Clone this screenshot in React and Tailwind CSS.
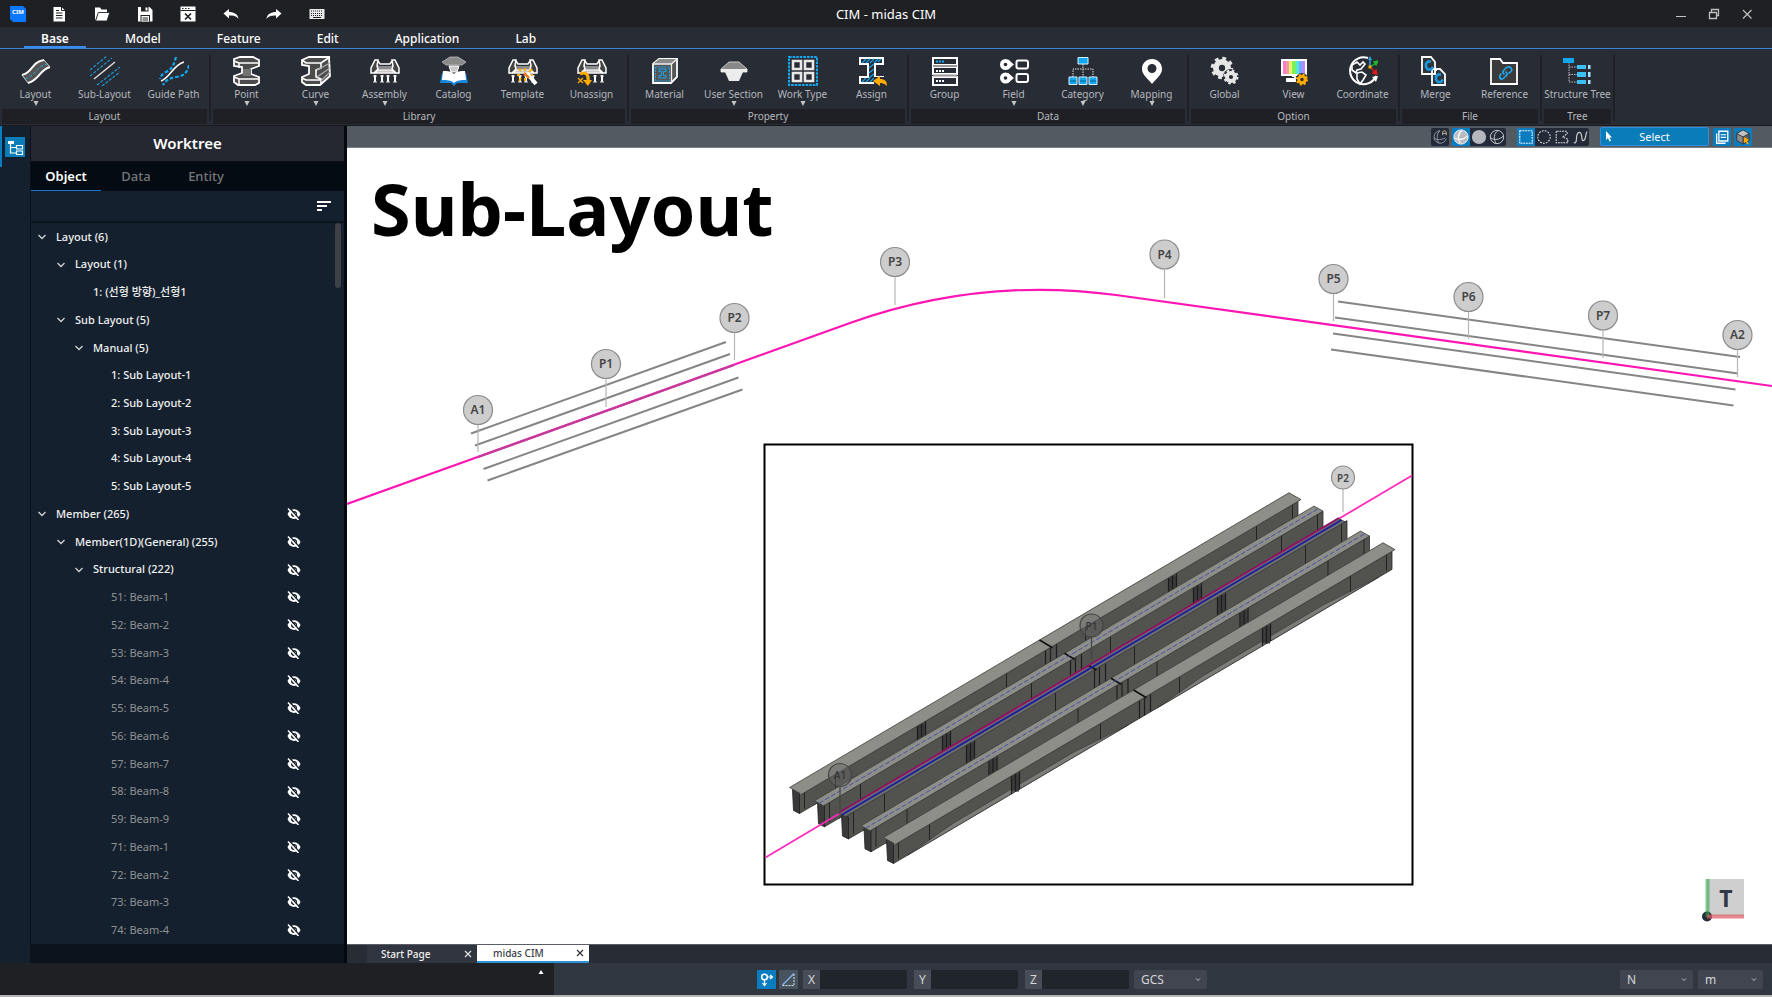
import { useState } from "react";

/* ---------- quick access icons (16 x 16) ---------- */

const quickIcons = [
  {
    name: "New",
    art: (
      <>
        <path d="M2.5 1h8l3.500 3.500V15.500H2.500z" fill="#fff" />
        <path d="M10.500 1v3.500H14" fill="none" stroke="#1f2024" />
        <path d="M5 4.500h3M5 7h6.500M5 9.500h6.500M5 12h6.500" stroke="#1f2024" />
      </>
    ),
  },
  {
    name: "Open",
    art: (
      <>
        <path d="M1 15V1.500h5l1.500 2H13V7H4.500z" fill="#fff" />
        <path d="M4.300 6.500H15.800L13 15H1.500z" fill="#fff" stroke="#1f2024" strokeWidth="0.900" />
      </>
    ),
  },
  {
    name: "Save",
    art: (
      <>
        <path d="M1 1h11.500L15.500 4v11.500H1z" fill="#fff" />
        <path d="M4 1h7.500v4.500H4zM3.500 9h9.500v6.500H3.500z" fill="#1f2024" />
        <path d="M8.500 1.500h2v3h-2zM4.500 10h7.500v5.500H4.500z" fill="#fff" />
        <path d="M5.500 12h5.500M5.500 14h5.500" stroke="#1f2024" />
      </>
    ),
  },
  {
    name: "Close file",
    art: (
      <>
        <path d="M.5.500h15v15H.500z" fill="#fff" />
        <path d="M.5 4.500h15" stroke="#1f2024" />
        <path d="M2 2.500h1.500M5 2.500h1.500M8 2.500h1.500" stroke="#1f2024" />
        <path d="M5 7.500l6 6M11 7.500l-6 6" stroke="#1f2024" strokeWidth="1.700" />
      </>
    ),
  },
  {
    name: "Undo",
    art: <path d="M6 3v3c5 0 9 2 9.500 7-2-3-5-3.500-9.500-3.500v3L.5 7.500z" fill="#fff" />,
  },
  {
    name: "Redo",
    art: <path d="M10 3v3C5 6 1 8 .5 13c2-3 5-3.500 9.500-3.500v3l5.500-5z" fill="#fff" />,
  },
  {
    name: "Keyboard",
    art: (
      <>
        <path d="M.5 3h15v10H.500z" fill="#e8e8e8" />
        <path
          d="M2 5h12M2 7.500h12M2 9.500h12"
          stroke="#1f2024"
          strokeDasharray="1 1"
        />
        <path d="M4 11.500h8" stroke="#1f2024" />
      </>
    ),
  },
];

/* ---------- ribbon icons (30 x 30) ---------- */

function Girders() {
  return (
    <>
      <path d="M5 5l4 5h12l4-5 4 9-3 4H4l-3-4z" fill="#8b8b8b" />
      <path d="M8 4H5L1 12v5h3l4-4-1-3z" fill="#444" stroke="#fff" strokeWidth="1.500" />
      <path d="M22 4h3l4 8v5h-3l-4-4 1-3z" fill="#444" stroke="#fff" strokeWidth="1.500" />
      <path d="M8 5l2 3h10l2-3" fill="none" stroke="#fff" strokeWidth="1.500" />
      <path d="M8 14l-3 3h20l-3-3z" fill="#c8c8c8" stroke="#fff" strokeWidth="1.200" />
      <path d="M5 19v7M12 19v7M18 19v7M25 19v7" stroke="#fff" strokeWidth="2" />
      <path d="M3 26h4M10 26h4M16 26h4M23 26h4M3 20h4M10 20h4M16 20h4M23 20h4" stroke="#ddd" strokeWidth="1" />
    </>
  );
}

function Gear({ cx, cy, r, fill, hole }) {
  return (
    <g>
      <circle cx={cx} cy={cy} r={r} fill={fill} />
      <circle
        cx={cx}
        cy={cy}
        r={r}
        fill="none"
        stroke={fill}
        strokeWidth={r * 0.5}
        strokeDasharray={`${(r * Math.PI) / 8} ${(r * Math.PI) / 8}`}
      />
      <circle cx={cx} cy={cy} r={r * 0.35} fill={hole} />
    </g>
  );
}

const icons = {
  layout: (
    <>
      <path d="M1 20C12 18 10 8 23 4l6 6C18 13 19 23 7 27z" fill="#555" />
      <path d="M1 19C12 17 10 6 23 4M7 27C19 24 18 14 29 11" fill="none" stroke="#fff" strokeWidth="2" />
      <path d="M1 19l6 8M23 4l6 7" stroke="#ccc" strokeWidth="1" />
      <path d="M4 23C15 20 14 11 26 8" fill="none" stroke="#29a9e0" strokeWidth="1" strokeDasharray="3 2" />
    </>
  ),
  subLayout: (
    <>
      <g stroke="#1f9bd7" strokeWidth="1.200" strokeDasharray="3 1.500">
        <path d="M0 14L17 0M0 20L22 2M7 29L30 11M12 30L30 16" />
      </g>
      <path d="M4 23L25 6" stroke="#ddd" strokeWidth="1.500" />
    </>
  ),
  guide: (
    <>
      <path d="M2 25C11 22 14 9 25 6" fill="none" stroke="#fff" strokeWidth="1.500" />
      <path
        d="M17 1C15 7 15 12 7 16C4 18 2 19 1 23M30 9C28 17 25 20 17 21C11 22 7 24 4 29"
        fill="none"
        stroke="#12a8f0"
        strokeWidth="2.200"
        strokeDasharray="3.500 2"
      />
    </>
  ),
  point: (
    <>
      <path d="M2 3L8 1h13l6 3v6l-8 3v5l8 3v6l-4 2H6l-4-3v-6l8-3v-6L2 10z" fill="#4b4b4b" stroke="#fff" strokeWidth="1.800" />
      <path d="M2 5l5 2h19M2 21l5 2h19M7 7v5M7 23v5" fill="none" stroke="#fff" strokeWidth="1.500" />
      <path d="M11 13h8v7h-8z" fill="#737373" />
    </>
  ),
  curve: (
    <>
      <path d="M1 4L8 1h20l1 19-10 9H5l-4-3v-5l7-3v-8L1 9z" fill="#4b4b4b" stroke="#fff" strokeWidth="1.800" />
      <path d="M1 4l4 3h15L29 1M20 7v5l-5 2v7l5 2v6M1 22l4 2h15" fill="none" stroke="#fff" strokeWidth="1.600" />
      <path d="M16 14L29 7M16 21L29 12M20 25l9-9" stroke="#aaa" strokeWidth="1.400" />
    </>
  ),
  assembly: <Girders />,
  catalog: (
    <>
      <path d="M3 17l12 2 12-2 2 10H18l-3 3-3-3H1z" fill="#1687dc" />
      <path d="M4 15c5 0 8 0 11 3 3-3 6-3 11-3l1 9c-5 0-9 0-12 3-3-3-7-3-12-3z" fill="#fff" />
      <path d="M3 6L11 1h8l8 5-4 3H7z" fill="#8a8a8a" stroke="#bbb" strokeWidth="0.800" />
      <path d="M10 10h10l-2 6h-6z" fill="#c9c9c9" stroke="#fff" />
    </>
  ),
  template: (
    <>
      <Girders />
      <path d="M19 17l9 11" stroke="#fff" strokeWidth="4" />
      <path d="M16 17l5 5" stroke="#f47a1f" strokeWidth="2.500" />
      <path
        d="M17 15v-3M21 16l3-3M13 15l-2-2M12 19H9M13 22l-2 3M17 22v3M23 19h2"
        stroke="#ffab00"
        strokeWidth="2"
      />
    </>
  ),
  unassign: (
    <>
      <Girders />
      <path d="M0 18h15v12H0z" fill="#282c35" />
      <path d="M1 22l5 5M6 22l-5 5" stroke="#ffab00" strokeWidth="1.300" />
      <path d="M3 18c6-3 9 1 8 7" fill="none" stroke="#ffab00" strokeWidth="3" />
      <path d="M6 24h9l-4 6z" fill="#ffab00" />
    </>
  ),
  material: (
    <>
      <path d="M3 8l6-5h18v18l-6 6H3z" fill="#555" stroke="#fff" strokeWidth="1.800" />
      <path d="M3 8l6-5h18l-5 5z" fill="#8b8b8b" />
      <path d="M3 8h18.500v19M21.500 8L27 3" fill="none" stroke="#eee" strokeWidth="1.300" />
      <path d="M5.500 11h14v14h-14z" fill="none" stroke="#12a8f0" strokeDasharray="2 1" />
      <path d="M9 13h7v2.500h-2.500v4H16V22H9v-2.500h2.500v-4H9z" fill="none" stroke="#12a8f0" />
    </>
  ),
  userSection: (
    <>
      <path d="M2 13L10 6h10l8 7v3H2z" fill="#888" stroke="#ccc" />
      <path d="M2 13h26v3H2z" fill="#eee" />
      <path d="M6 16h18l-4 9H10z" fill="#ececec" />
    </>
  ),
  workType: (
    <>
      <path d="M1 1h28v28H1z" fill="none" stroke="#12a8f0" strokeWidth="2" strokeDasharray="2.600 1" />
      <path d="M5 5h8v8H5zM17 5h8v8h-8zM5 17h8v8H5zM17 17h8v8h-8z" fill="#282c35" stroke="#e8e8e8" strokeWidth="2.600" />
    </>
  ),
  assign: (
    <>
      <path d="M3 2h23v6h-8v13h8v6H3v-6h8V8H3z" fill="#282c35" stroke="#fff" strokeWidth="2" />
      <path
        d="M5 7l4-4M9 7l4-4M13 7l4-4M17 7l4-4M21 6l3-3M12 12l5-4M12 17l5-4M12 22l5-4M5 26l4-4M9 26l4-4M13 26l4-4M17 26l4-4"
        stroke="#12a8f0"
        strokeWidth="1.200"
      />
      <path d="M17 21h13v9H17z" fill="#282c35" />
      <path d="M23 20v3c5 0 7 2 7 7-2-2-4-3-7-3v3l-7-5z" fill="#ffab00" />
    </>
  ),
  group: (
    <>
      <path d="M3 2h24v7H3zM3 11h24v7H3zM3 21h24v8H3z" fill="none" stroke="#fff" strokeWidth="2" />
      <path d="M3 10h24M3 19.500h24" stroke="#999" strokeWidth="2" />
      <path d="M6 5.500h8" stroke="#12a8f0" strokeWidth="2" strokeDasharray="2 1" />
      <path d="M6 15h8M6 25h8" stroke="#fff" strokeWidth="2" strokeDasharray="2 1" />
    </>
  ),
  field: (
    <>
      <g fill="#fff">
        <circle cx="6.500" cy="8.500" r="5.500" />
        <path d="M9 3.500l6 5-6 5z" />
        <circle cx="6.500" cy="22" r="5.500" />
        <path d="M9 17l6 5-6 5z" />
      </g>
      <circle cx="6.500" cy="8.500" r="1.800" fill="#282c35" />
      <circle cx="6.500" cy="22" r="1.800" fill="#282c35" />
      <rect x="17.500" y="4.500" width="11.500" height="8" rx="2" fill="none" stroke="#fff" strokeWidth="2" />
      <rect x="17.500" y="18" width="11.500" height="8" rx="2" fill="none" stroke="#fff" strokeWidth="2" />
    </>
  ),
  category: (
    <>
      <path d="M15 8v13M5 21v-8h20v8" fill="none" stroke="#ddd" strokeDasharray="1.500 1" />
      <path d="M10 1.500h10V8H10zM1 21h8v7.500H1zM11 21h8v7.500h-8zM21 21h8v7.500h-8z" fill="#12a8f0" stroke="#d6efff" />
      <path d="M2 25h6M12 25h6M22 25h6" stroke="#0a5f92" />
    </>
  ),
  mapping: (
    <path
      fillRule="evenodd"
      d="M15 3C9 3 5 7.500 5 13c0 6 6 9.500 10 15 4-5.500 10-9 10-15 0-5.500-4-10-10-10zm0 5a4.500 4.500 0 110 9 4.500 4.500 0 010-9z"
      fill="#fff"
    />
  ),
  global: (
    <>
      <Gear cx={12} cy={12} r={9} fill="#e6e6e6" hole="#282c35" />
      <circle cx="21" cy="21" r="8" fill="#282c35" />
      <Gear cx={21} cy={21} r={6} fill="#e6e6e6" hole="#282c35" />
    </>
  ),
  view: (
    <>
      <path d="M2 3h26v17H2z" fill="#fff" />
      <path d="M4 5h3v13H4z" fill="#ff7bd0" />
      <path d="M7 5h3v13H7z" fill="#e8a0a0" />
      <path d="M10 5h3v13h-3z" fill="#f4f06a" />
      <path d="M13 5h4v13h-4z" fill="#7dee5c" />
      <path d="M17 5h3v13h-3z" fill="#55e6d8" />
      <path d="M20 5h3v13h-3z" fill="#7aa8ff" />
      <path d="M23 5h3v13h-3z" fill="#b38bff" />
      <path d="M13 20h3v3H8v2h9" fill="none" stroke="#fff" strokeWidth="1.800" />
      <circle cx="23" cy="23" r="6" fill="#282c35" />
      <Gear cx={23} cy={23.5} r={4.8} fill="#ffab00" hole="#282c35" />
    </>
  ),
  coordinate: (
    <>
      <path d="M20 2A13.500 13.500 0 1028 20" fill="none" stroke="#fff" strokeWidth="2" />
      <path d="M24 21l6-1-2 6z" fill="#fff" />
      <path d="M4 9l5-3 3 3 3-3 2 2-4 5-4 1-1 3-4-3z" fill="#282c35" stroke="#fff" strokeWidth="1.600" />
      <path d="M9 17l5-1 4 3-3 5-3 4-3-5z" fill="#282c35" stroke="#fff" strokeWidth="1.600" />
      <path d="M22 11V3" stroke="#29a9e0" strokeWidth="1.500" />
      <path d="M20 4l2-4 2 4z" fill="#29a9e0" />
      <path d="M22 11l6-4M26 6l4-1-2 4z" stroke="#1fb52a" strokeWidth="1.300" fill="#1fb52a" />
      <path d="M22 11l5 5M25 17l4 1-1-4z" stroke="#e01a1a" strokeWidth="1.300" fill="#e01a1a" />
      <path d="M20.500 9.500h3v3h-3z" fill="#ffab00" />
    </>
  ),
  merge: (
    <>
      <path d="M1 1h9l4 5v12H1zM11 13h8l5 5v11H11z" fill="#30343c" stroke="#fff" strokeWidth="1.800" />
      <path d="M10 5.500H7L5 8v3l2 2.500h3L12 11M20 18.500h-3l-2 2v3l2 2.500h3l2-2.500" fill="none" stroke="#1a9be0" strokeWidth="2.600" />
      <path d="M12 18l5-5" stroke="#fff" />
    </>
  ),
  reference: (
    <>
      <path d="M1 3h9l3 4h14v21H1z" fill="#3b3b3b" stroke="#fff" strokeWidth="1.800" />
      <g fill="none" stroke="#1fa8ee" strokeWidth="1.700" strokeLinecap="round">
        <path d="M14 18c-2-2-1-3 1-5s4-3 6-1 0 4-2 5" />
        <path d="M16 16c2 2 1 3-1 5s-4 3-5 1 0-3 1-4" />
      </g>
    </>
  ),
  structureTree: (
    <>
      <path d="M6 6v20h9M6 11h9M6 18.500h9" fill="none" stroke="#bbb" strokeDasharray="1.500 1" />
      <path d="M0 2h11v5H0z" fill="#12a8f0" />
      <path d="M14 9h9v4h-9zM14 16h9v5h-9zM14 24h9v4h-9z" fill="#3cc0f8" />
      <path d="M25 9h2.500v4H25zM25 16h2.500v5H25zM25 24h2.500v4H25z" fill="#a8e4ff" />
    </>
  ),
};

const ribbon = [
  {
    title: "Layout",
    tools: [
      { label: "Layout", icon: "layout", menu: true },
      { label: "Sub-Layout", icon: "subLayout" },
      { label: "Guide Path", icon: "guide" },
    ],
  },
  {
    title: "Library",
    tools: [
      { label: "Point", icon: "point", menu: true },
      { label: "Curve", icon: "curve", menu: true },
      { label: "Assembly", icon: "assembly", menu: true },
      { label: "Catalog", icon: "catalog" },
      { label: "Template", icon: "template" },
      { label: "Unassign", icon: "unassign" },
    ],
  },
  {
    title: "Property",
    tools: [
      { label: "Material", icon: "material" },
      { label: "User Section", icon: "userSection", menu: true },
      { label: "Work Type", icon: "workType", menu: true },
      { label: "Assign", icon: "assign" },
    ],
  },
  {
    title: "Data",
    tools: [
      { label: "Group", icon: "group" },
      { label: "Field", icon: "field", menu: true },
      { label: "Category", icon: "category", menu: true },
      { label: "Mapping", icon: "mapping", menu: true },
    ],
  },
  {
    title: "Option",
    tools: [
      { label: "Global", icon: "global" },
      { label: "View", icon: "view" },
      { label: "Coordinate", icon: "coordinate" },
    ],
  },
  {
    title: "File",
    tools: [
      { label: "Merge", icon: "merge" },
      { label: "Reference", icon: "reference" },
    ],
  },
  {
    title: "Tree",
    tools: [{ label: "Structure Tree", icon: "structureTree" }],
  },
];

const menuTabs = ["Base", "Model", "Feature", "Edit", "Application", "Lab"];

const tree = [
  { text: "Layout (6)", level: 0, open: true },
  { text: "Layout (1)", level: 1, open: true },
  { text: "1: (선형 방향)_선형1", level: 2 },
  { text: "Sub Layout (5)", level: 1, open: true },
  { text: "Manual (5)", level: 2, open: true },
  { text: "1: Sub Layout-1", level: 3 },
  { text: "2: Sub Layout-2", level: 3 },
  { text: "3: Sub Layout-3", level: 3 },
  { text: "4: Sub Layout-4", level: 3 },
  { text: "5: Sub Layout-5", level: 3 },
  { text: "Member (265)", level: 0, open: true, eye: true },
  { text: "Member(1D)(General) (255)", level: 1, open: true, eye: true },
  { text: "Structural (222)", level: 2, open: true, eye: true },
  { text: "51: Beam-1", level: 3, eye: true, dim: true },
  { text: "52: Beam-2", level: 3, eye: true, dim: true },
  { text: "53: Beam-3", level: 3, eye: true, dim: true },
  { text: "54: Beam-4", level: 3, eye: true, dim: true },
  { text: "55: Beam-5", level: 3, eye: true, dim: true },
  { text: "56: Beam-6", level: 3, eye: true, dim: true },
  { text: "57: Beam-7", level: 3, eye: true, dim: true },
  { text: "58: Beam-8", level: 3, eye: true, dim: true },
  { text: "59: Beam-9", level: 3, eye: true, dim: true },
  { text: "71: Beam-1", level: 3, eye: true, dim: true },
  { text: "72: Beam-2", level: 3, eye: true, dim: true },
  { text: "73: Beam-3", level: 3, eye: true, dim: true },
  { text: "74: Beam-4", level: 3, eye: true, dim: true },
];

const indent = ["pl-[5px]", "pl-[24px]", "pl-[42px]", "pl-[60px]"];

function TitleBar() {
  return (
    <div className="grid h-[27px] shrink-0 grid-cols-[1fr_auto_1fr] items-center bg-[#1f2024]">
      <div className="flex items-center gap-[27px] pl-[10px]">
        <svg viewBox="0 0 16 16" className="-mr-[2px] size-4" aria-label="CIM">
          <path d="M1 0h12l3 3v13H3l-3-3V0z" fill="#0a78ff" />
          <text x="8" y="7.500" textAnchor="middle" fontSize="6" fontWeight="700" fill="#fff">
            CIM
          </text>
        </svg>
        {quickIcons.map((q) => (
          <button key={q.name} aria-label={q.name}>
            <svg viewBox="0 0 16 16" className="block size-4">
              {q.art}
            </svg>
          </button>
        ))}
      </div>
      <h1 className="pt-[2px] text-[13px] text-white">CIM - midas CIM</h1>
      <div className="flex justify-end gap-[17px] pr-[17px]">
        <button aria-label="Minimize">
          <svg viewBox="0 0 16 16" className="block size-4">
            <path d="M3 10.500h10" stroke="#c0c0c0" />
          </svg>
        </button>
        <button aria-label="Restore">
          <svg viewBox="0 0 16 16" className="block size-4">
            <path d="M3.500 6.500h7v6h-7zM5.500 6V3.500h7v6H11" fill="none" stroke="#c0c0c0" strokeWidth="1.300" />
          </svg>
        </button>
        <button aria-label="Close">
          <svg viewBox="0 0 16 16" className="block size-4">
            <path d="M4 4l8.500 8.500M12.500 4L4 12.500" stroke="#c0c0c0" strokeWidth="1.200" />
          </svg>
        </button>
      </div>
    </div>
  );
}

function Ribbon() {
  const [tab, setTab] = useState("Base");

  return (
    <div className="shrink-0 bg-[#282c35]">
      <div className="flex h-[22px] gap-[22px] border-b border-[#3b82dc] pl-6">
        {menuTabs.map((name) => (
          <button
            key={name}
            onClick={() => setTab(name)}
            className={`h-[21px] border-b-2 px-[17px] pt-[2px] text-[12px] leading-[20px] text-white ${
              tab === name ? "border-[#3b8cf0] font-semibold" : "border-transparent font-medium"
            }`}
          >
            {name}
          </button>
        ))}
      </div>
      <div className="flex h-[77px] border-b border-[#191b20]">
        {ribbon.map((group) => (
          <div key={group.title} className="flex pl-px">
            <div>
              <div className="flex">
                {group.tools.map((tool) => (
                  <button key={tool.label} className="flex h-[60px] w-[69px] flex-col items-center pt-[7px]">
                    <svg viewBox="0 0 30 30" className="size-[30px] shrink-0">
                      {icons[tool.icon]}
                    </svg>
                    <span className="pt-px text-[10px] leading-[15px] whitespace-nowrap text-[#b4b8be]">
                      {tool.label}
                    </span>
                    {tool.menu && (
                      <svg viewBox="0 0 6 5" className="-mt-px h-[5px] w-[6px]">
                        <path d="M.5 0h5L3 5z" fill="#c8c8c8" />
                      </svg>
                    )}
                  </button>
                ))}
              </div>
              <div className="mx-px h-[15px] bg-[#1f2025] text-center text-[10px] leading-[15px] text-[#b4b8be]">
                {group.title}
              </div>
            </div>
            <div className="mt-[6px] mb-[4px] ml-px w-[2px] bg-[#1d2027]"></div>
          </div>
        ))}
      </div>
    </div>
  );
}

function Worktree() {
  const [tab, setTab] = useState("Object");

  return (
    <aside className="flex w-[317px] shrink-0 flex-col border-r-3 border-l border-r-[#04080f] border-l-[#0b121b] bg-[#14202d]">
      <h2 className="h-[35px] shrink-0 bg-[#252831] text-center text-[15px] leading-[34px] font-semibold text-white">
        Worktree
      </h2>
      <div className="flex h-[30px] shrink-0 border-t border-[#0b0f15] bg-[#040b12]">
        {["Object", "Data", "Entity"].map((name) => (
          <button
            key={name}
            onClick={() => setTab(name)}
            className={`w-[70px] border-b text-[13px] leading-[26px] ${
              tab === name
                ? "border-[#1a78c8] font-semibold text-white"
                : "border-transparent font-medium text-[#75777b]"
            }`}
          >
            {name}
          </button>
        ))}
      </div>
      <div className="flex h-[32px] shrink-0 items-center justify-end border-b-2 border-[#0c141e] pr-[13px]">
        <button aria-label="Sort">
          <svg viewBox="0 0 14 10" className="block h-[10px] w-[14px]">
            <path d="M0 1h14M0 5h10M0 9h5" stroke="#fff" strokeWidth="2" />
          </svg>
        </button>
      </div>
      <div className="relative flex min-h-0 flex-1 flex-col overflow-hidden">
        {tree.map((row) => (
          <div key={row.text} className={`flex min-h-5 flex-1 items-center pr-[43px] ${indent[row.level]}`}>
            <span className="w-[20px]">
              {row.open && (
                <svg viewBox="0 0 10 6" className="ml-px h-[6px] w-[10px]">
                  <path d="M1.500 1L5 4.500 8.500 1" fill="none" stroke="#d0d3d6" strokeWidth="1.300" />
                </svg>
              )}
            </span>
            <span className={`flex-1 text-[11px] ${row.dim ? "text-[#8f9294]" : "font-medium text-[#f0f1f2]"}`}>
              {row.text}
            </span>
            {row.eye && (
              <button aria-label={`Show ${row.text}`}>
                <svg viewBox="0 0 14 12" className="block h-[12px] w-[14px]">
                  <path d="M.5 6C3-.5 11-.5 13.500 6 11 12.500 3 12.500.5 6z" fill="#fff" />
                  <circle cx="7" cy="6" r="3" fill="#14202d" />
                  <circle cx="7.500" cy="6" r="1.600" fill="#fff" />
                  <path d="M2.500 0l10 11" stroke="#14202d" strokeWidth="1.500" />
                  <path d="M1 .5L11.500 12" stroke="#fff" strokeWidth="1.500" />
                </svg>
              </button>
            )}
          </div>
        ))}
        <div className="absolute top-0 right-[3px] h-[65px] w-[6px] rounded-full bg-[#3d4047]"></div>
      </div>
      <div className="h-[19px] shrink-0 bg-[#0c131d]"></div>
    </aside>
  );
}

function ToolIcon({ label, active, children }) {
  return (
    <button aria-label={label} className={`p-px ${active ? "bg-[#0a7cc0]" : ""}`}>
      <svg viewBox="0 0 18 18" className="block size-4">
        {children}
      </svg>
    </button>
  );
}

function ViewBar() {
  return (
    <div className="flex h-[22px] shrink-0 items-center justify-end border-b border-[#7b8087] bg-[#545a62] pr-5">
      <div className="flex rounded-xs bg-[#242b38]">
        <ToolIcon label="Auto shading">
          <path d="M9 2a7 7 0 107 9M2 10c4 3 9 2 13 0M9 2c-4 3-4 10-1 14" fill="none" stroke="#9a9ea5" />
          <path d="M12 7V3l2-1 2 1v4M12 5h4" fill="none" stroke="#c8b8a0" />
        </ToolIcon>
      </div>
      <div className="ml-[3px] flex rounded-xs bg-[#242b38]">
        <ToolIcon label="Shaded with edges" active>
          <circle cx="9" cy="9" r="8" fill="#b8bbc0" />
          <path d="M2 10c4 3 10 2 14-2M10 2c-5 3-5 10-2 14" fill="none" stroke="#fff" strokeWidth="1.300" />
          <circle cx="9" cy="9" r="8" fill="none" stroke="#fff" />
        </ToolIcon>
        <ToolIcon label="Shaded">
          <circle cx="9" cy="9" r="8" fill="#b4b7bd" />
        </ToolIcon>
        <ToolIcon label="Wireframe">
          <circle cx="9" cy="9" r="7.500" fill="none" stroke="#d5d8dc" />
          <path d="M2 10c4 3 10 2 14-2M10 2c-5 3-5 10-2 14" fill="none" stroke="#d5d8dc" />
        </ToolIcon>
      </div>
      <div className="ml-[11px] flex rounded-xs bg-[#242b38]">
        <ToolIcon label="Box select" active>
          <path d="M2 2h14v14H2z" fill="none" stroke="#fff" strokeWidth="1.200" strokeDasharray="2 1" />
        </ToolIcon>
        <ToolIcon label="Circle select">
          <circle cx="9" cy="9" r="7" fill="none" stroke="#e0e0e0" strokeWidth="1.200" strokeDasharray="2 1.300" />
        </ToolIcon>
        <ToolIcon label="Polygon select">
          <path d="M2.500 2.500v13h13v-4L10 9l5-4-1-2.500z" fill="none" stroke="#e0e0e0" strokeWidth="1.200" strokeDasharray="2 1" />
        </ToolIcon>
        <ToolIcon label="Fence select">
          <path d="M2 15c2 2 3-1 3-4s1-8 4-7 1 10 4 9 2-8 4-10" fill="none" stroke="#d0d0d0" strokeWidth="1.300" />
        </ToolIcon>
      </div>
      <button className="relative ml-[11px] h-[19px] w-[109px] rounded-xs border border-[#2b8fe6] bg-[#0a7cb8] text-[11px] leading-[16px] text-white">
        Select
        <svg viewBox="0 0 8 11" className="absolute top-[3px] left-[4px] h-[11px] w-[8px]">
          <path d="M1 0v9l2-2 1.500 3.500 1.500-.7L4.500 6.500H7z" fill="#fff" />
        </svg>
      </button>
      <div className="ml-[4px] flex gap-[3px]">
        <ToolIcon label="Window list" active>
          <path d="M3 5v11h10M5.500 2.500h10v11h-10z" fill="none" stroke="#fff" strokeWidth="1.500" />
          <path d="M7.500 6.500h6M7.500 9.500h6" stroke="#fff" strokeWidth="1.300" />
        </ToolIcon>
        <ToolIcon label="Pick solid" active>
          <path d="M9 1l7 4-7 4-7-4z" fill="#c2c2c2" />
          <path d="M2 5l7 4v8l-7-4z" fill="#8c8c8c" />
          <path d="M9 9l7-4v8l-7 4z" fill="#5e5e5e" />
          <path d="M9 1l7 4v8l-7 4-7-4V5zM2 5l7 4 7-4M9 9v8" fill="none" stroke="#333" />
          <path d="M10 9v7l2-1.500 2 3 1.500-1-2-3 2.500-1z" fill="#ffab00" />
        </ToolIcon>
      </div>
    </div>
  );
}

/* ---------- model view ---------- */

const pins = [
  { name: "A1", x: 478, y: 410, foot: 452 },
  { name: "P1", x: 606, y: 364, foot: 407 },
  { name: "P2", x: 734.5, y: 318, foot: 360 },
  { name: "P3", x: 895, y: 262, foot: 305 },
  { name: "P4", x: 1164.5, y: 254.5, foot: 298 },
  { name: "P5", x: 1333.5, y: 279, foot: 321 },
  { name: "P6", x: 1468.5, y: 297, foot: 339 },
  { name: "P7", x: 1603, y: 315.5, foot: 358 },
  { name: "A2", x: 1737.5, y: 335, foot: 377 },
];

const offsets = [
  [471, 433.5, 726, 342],
  [475, 445.5, 730, 354],
  [483.5, 469, 738.5, 377.5],
  [487.5, 480.5, 742.5, 389.5],
  [1338, 301.5, 1740, 357],
  [1335, 317.5, 1738, 373.5],
  [1333, 333.5, 1735.5, 389.5],
  [1331, 349.5, 1733.5, 405.5],
];

const SLOPE = 0.59;

const beams = [
  { x: 789.5, y: 787.5, fw: 12, fh: 6.8 },
  { x: 814.5, y: 800.8, fw: 9, fh: 5 },
  { x: 838.5, y: 813, fw: 7, fh: 3.5, main: true },
  { x: 861, y: 825.8, fw: 9, fh: 5 },
  { x: 883.5, y: 837.5, fw: 12, fh: 6.8 },
];

function Beam({ x, y, fw, fh, main }) {
  const len = 499.5;
  const rise = len * SLOPE;
  const edge = (dx) => y + fh - (dx - fw) * SLOPE; // lower edge of the top flange
  const base = (dx) => y + 26 - (dx - 10) * SLOPE; // bottom of the web

  return (
    <g>
      <polygon
        points={`${x + 7},${edge(7)} ${x + len + 9},${edge(len + 9)} ${x + len + 9},${base(len + 9)} ${x + 10},${y + 26}`}
        fill="#52524f"
        stroke="#2c2c2c"
        strokeWidth="0.8"
      />
      {/* bottom flange, wider between the tapered ends */}
      {[40, 290].map((s) => (
        <polygon
          key={s}
          points={`${x + s - 16},${base(s - 16)} ${x + s + 30},${base(s + 30) - 5} ${x + s + 150},${base(s + 150) - 5} ${x + s + 205},${base(s + 205)}`}
          fill="#7b7c78"
          stroke="#333"
          strokeWidth="0.6"
        />
      ))}
      <polygon
        points={`${x + 3},${y + 2} ${x + 10},${y + 4} ${x + 10},${y + 26} ${x + 4},${y + 23}`}
        fill="#3a3a3a"
        stroke="#1f1f1f"
        strokeWidth="0.8"
      />
      {[15, 46, 217, 296, 467, 503].map((dx) => (
        <path key={dx} d={`M${x + dx} ${edge(dx)}V${base(dx) - 2}`} stroke="#222" strokeWidth="1" />
      ))}
      {[132, 383].map((dx) => (
        <g key={dx}>
          <path d={`M${x + dx} ${edge(dx)}V${base(dx)}`} stroke="#3a3a3a" strokeWidth="7" />
          <path
            d={`M${x + dx - 4} ${edge(dx - 4)}V${base(dx - 4)}M${x + dx} ${edge(dx)}V${base(dx)}M${x + dx + 4} ${edge(dx + 4)}V${base(dx + 4)}`}
            stroke="#1c1c1c"
            strokeWidth="1.2"
          />
        </g>
      ))}
      <path
        d={`M${x + 256} ${edge(256)}V${base(256)}M${x + 261} ${edge(261)}V${base(261)}M${x + 267} ${edge(267)}V${base(267)}`}
        stroke="#1e1e1e"
        strokeWidth="1.2"
      />
      <polygon
        points={`${x},${y} ${x + len},${y - rise} ${x + len + fw},${y - rise + fh} ${x + fw},${y + fh}`}
        fill={main ? "#6d6e70" : "#8d8e88"}
        stroke="#3c3c3a"
        strokeWidth="0.8"
      />
      <path d={`M${x + 250} ${y - 250 * SLOPE}l${fw + 1} ${fh + 1}`} stroke="#111" strokeWidth="1.6" />
      {fw < 12 && (
        <path
          d={`M${x + fw / 2} ${y + fh / 2}l${len} ${-rise}`}
          stroke={main ? "#1b1f9c" : "#4a4fa8"}
          strokeWidth={main ? 1.8 : 1}
          strokeDasharray={main ? undefined : "5 2"}
        />
      )}
    </g>
  );
}

function Pin({ name, x, y, foot, r = 14.5, faded }) {
  return (
    <g>
      <path d={`M${x} ${y + r}V${foot}`} stroke={faded ? "#444" : "#b5b5b5"} strokeWidth="1.2" />
      <circle
        cx={x}
        cy={y}
        r={r}
        fill={faded ? "#666" : "#cdcdcd"}
        fillOpacity={faded ? 0.45 : 1}
        stroke={faded ? "#444" : "#8c8c8c"}
        strokeWidth="1.2"
      />
      <text
        x={x}
        y={y + 4}
        textAnchor="middle"
        fontSize={r > 13 ? 12 : 10}
        fontWeight={faded ? 500 : 600}
        fill={faded ? "#333" : "#444"}
      >
        {name}
      </text>
    </g>
  );
}

function ModelView() {
  return (
    <div className="relative min-h-0 flex-1 overflow-hidden bg-white">
      <svg
        viewBox="347 148 1425 796"
        preserveAspectRatio="xMidYMid meet"
        className="block size-full"
        role="img"
        aria-label="Sub-layout alignment"
      >
        <text x="371" y="236" fontSize="72" fontWeight="700" fill="#000">
          Sub-Layout
        </text>

        {offsets.map(([x1, y1, x2, y2]) => (
          <line key={y1} x1={x1} y1={y1} x2={x2} y2={y2} stroke="#858585" strokeWidth="2" />
        ))}
        {pins.map((pin) => (
          <Pin key={pin.name} {...pin} />
        ))}
        <path d="M347 504L850 323Q980.500 276.600 1116 295L1772 386" fill="none" stroke="#ff14b4" strokeWidth="2.200" />
        <path d="M478 457L734 365" stroke="#c23a9a" strokeWidth="2.200" />

        <rect x="764.500" y="444.500" width="648" height="440" fill="#fff" stroke="#000" strokeWidth="2" />
        <path d="M1335 521L1412 475.500" stroke="#ff2cbc" strokeWidth="1.800" />
        {beams.slice(0, 2).map((beam) => (
          <Beam key={beam.x} {...beam} />
        ))}
        <path d="M765.500 857.500L842 812" stroke="#ff2cbc" strokeWidth="1.800" />
        {beams.slice(2, 3).map((beam) => (
          <Beam key={beam.x} {...beam} />
        ))}
        <path d="M840 812L1339 518" stroke="#960f62" strokeWidth="1.800" />
        {beams.slice(3).map((beam) => (
          <Beam key={beam.x} {...beam} />
        ))}
        <Pin name="A1" x={840} y={775} foot={810} r={11.5} faded />
        <Pin name="P1" x={1091.5} y={625.5} foot={660} r={11.5} faded />
        <Pin name="P2" x={1343} y={477.5} foot={512} r={11.5} />

        <path d="M1707 879h37v37h-37z" fill="#cfcfcf" />
        <circle cx="1707" cy="916.500" r="5" fill="#272d3a" />
        <path d="M1707.500 879v38" stroke="#2ea84a" strokeOpacity="0.600" strokeWidth="4" />
        <path d="M1707 916.500h37" stroke="#e05a62" strokeOpacity="0.700" strokeWidth="4" />
        <text x="1726" y="907" textAnchor="middle" fontSize="23" fontWeight="700" fill="#323846">
          T
        </text>
      </svg>
    </div>
  );
}

function FileTabs() {
  return (
    <div className="flex h-[19px] shrink-0 border-t border-[#5a5e66] bg-[#282c35] pl-5 text-[10px] leading-[17px]">
      <div className="flex w-[110px] justify-between bg-[#30353f] pr-[5px] pl-[14px] font-medium text-[#f0f0f0]">
        <button>Start Page</button>
        <button aria-label="Close Start Page">
          <svg viewBox="0 0 8 8" className="size-[8px]">
            <path d="M1 1l6 6M7 1L1 7" stroke="#e0e0e0" strokeWidth="1.200" />
          </svg>
        </button>
      </div>
      <div className="flex w-[112px] justify-between border-b-2 border-[#2a94d8] bg-white pr-[5px] pl-[16px] font-medium text-[#3a3d45]">
        <button>midas CIM</button>
        <button aria-label="Close midas CIM">
          <svg viewBox="0 0 8 8" className="size-[8px]">
            <path d="M1 1l6 6M7 1L1 7" stroke="#333" strokeWidth="1.200" />
          </svg>
        </button>
      </div>
    </div>
  );
}

function Picker({ label, value, wide }) {
  return (
    <div className="relative">
      <select
        aria-label={label}
        className={`block h-[19px] appearance-none rounded-xs bg-[#41454f] px-[7px] text-[12px] leading-[18px] text-[#d4d6da] ${
          wide ? "w-[73px]" : "w-[65px]"
        }`}
      >
        <option>{value}</option>
      </select>
      <svg viewBox="0 0 6 4" className="pointer-events-none absolute top-[8px] right-[6px] h-[4px] w-[6px]">
        <path d="M1 .5l2 2 2-2" fill="none" stroke="#c0c2c6" />
      </svg>
    </div>
  );
}

function StatusBar() {
  return (
    <footer className="flex h-[34px] shrink-0 border-b-2 border-[#b4b4b4] bg-[#313740]">
      <div className="flex w-[554px] justify-end bg-[#1f2024] pt-[7px] pr-[10px]">
        <button aria-label="Expand messages" className="h-[4px]">
          <svg viewBox="0 0 6 4" className="block h-[4px] w-[6px]">
            <path d="M.5 4h5L3 0z" fill="#fff" />
          </svg>
        </button>
      </div>
      <div className="flex flex-1 items-start justify-between pt-[7px] pr-[9px] pl-[203px]">
        <div className="flex">
          <button aria-label="Snap" className="bg-[#0a7cc0]">
            <svg viewBox="0 0 19 19" className="block size-[19px]">
              <circle cx="7.500" cy="7" r="2.800" fill="none" stroke="#fff" strokeWidth="1.600" />
              <path d="M10.500 7H15M13 5l2.500 2L13 9M7.500 10v5M5.500 13l2 2.500 2-2.500" fill="none" stroke="#fff" strokeWidth="1.200" />
            </svg>
          </button>
          <button aria-label="Ortho" className="ml-[3px] bg-[#47535f]">
            <svg viewBox="0 0 19 19" className="block size-[19px]">
              <path d="M3.500 15L15 3.500" stroke="#7fb2f0" strokeWidth="1.500" />
              <path d="M15 4v11.500H3" fill="none" stroke="#e0e0e0" strokeDasharray="2 1" />
            </svg>
          </button>
          <div className="ml-[5px] flex gap-[7px]">
            {["X", "Y", "Z"].map((axis) => (
              <label key={axis} className="flex">
                <span className="h-[19px] w-[17px] bg-[#484c56] text-center text-[12px] leading-[19px] text-[#d4d6da]">
                  {axis}
                </span>
                <input type="text" className="h-[19px] w-[87px] rounded-r-xs bg-[#20252b] px-1 text-[11px] text-white" />
              </label>
            ))}
          </div>
          <div className="ml-[5px]">
            <Picker label="Coordinate system" value="GCS" wide />
          </div>
        </div>
        <div className="flex gap-[5px]">
          <Picker label="Force unit" value="N" wide />
          <Picker label="Length unit" value="m" />
        </div>
      </div>
    </footer>
  );
}

export default function App() {
  return (
    <div className="flex h-screen flex-col overflow-hidden bg-[#14202d] font-['Noto_Sans','Noto_Sans_CJK_KR',sans-serif]">
      <TitleBar />
      <Ribbon />
      <div className="flex min-h-0 flex-1">
        <nav className="w-[30px] shrink-0 bg-[#14202d]">
          <div className="flex h-[41px] items-center border-l-2 border-[#0a7cc0] pl-[3px]">
            <button aria-label="Worktree" className="bg-[#0a7cb8]">
              <svg viewBox="0 0 20 20" className="block size-5">
                <path d="M3 4h6v3H3z" fill="#fff" />
                <path d="M5.500 7v9H11M5.500 10.500H11" fill="none" stroke="#fff" strokeWidth="1.200" />
                <path d="M11.500 8.500h6V12h-6zM11.500 14h6v3.500h-6z" fill="none" stroke="#fff" strokeWidth="1.200" />
              </svg>
            </button>
          </div>
        </nav>
        <Worktree />
        <main className="flex min-w-0 flex-1 flex-col">
          <ViewBar />
          <ModelView />
          <FileTabs />
        </main>
      </div>
      <StatusBar />
    </div>
  );
}
